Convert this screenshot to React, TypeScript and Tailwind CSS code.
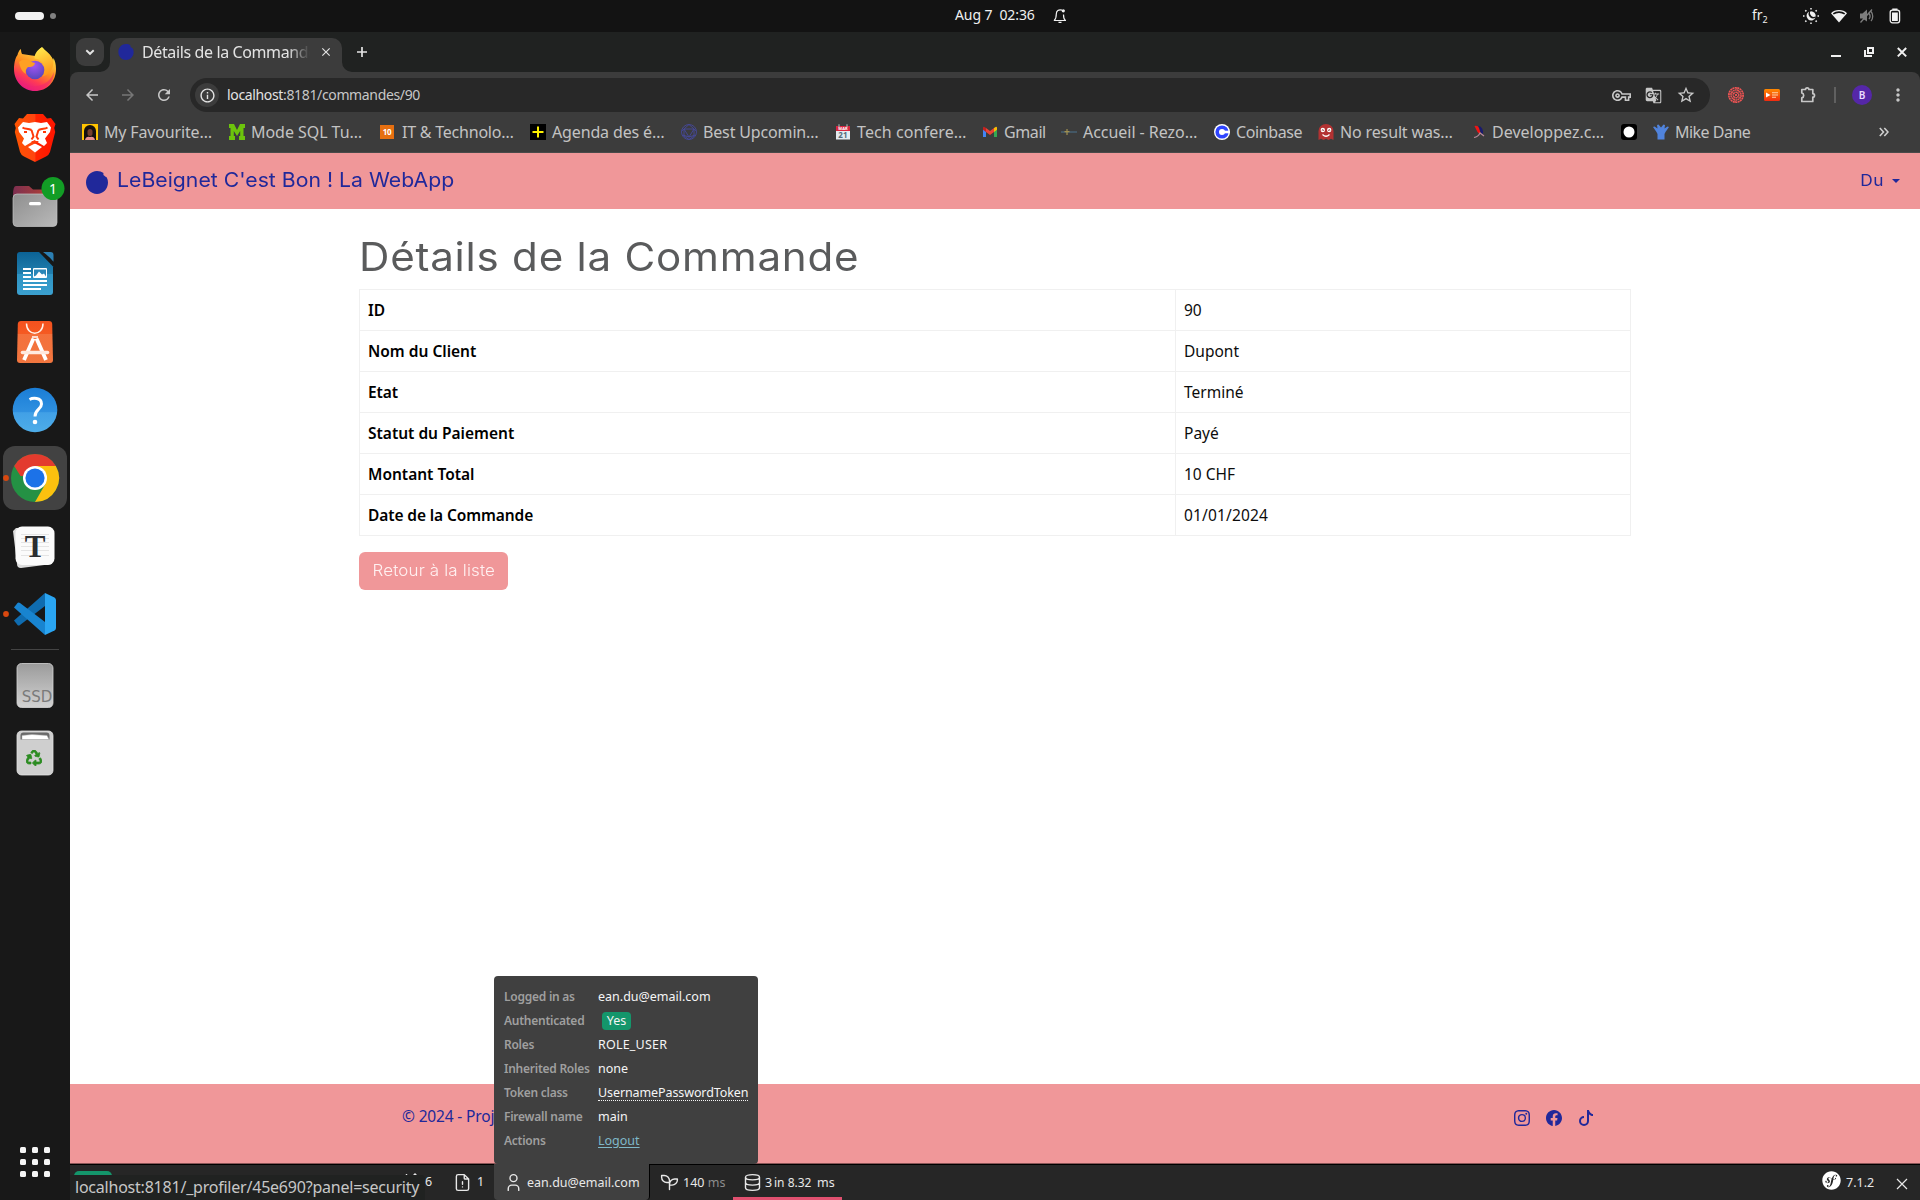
import type { ReactNode } from "react";
import { BsFacebook, BsInstagram, BsTiktok } from "react-icons/bs";
import { FaSymfony, FaRecycle } from "react-icons/fa";
import {
  MdArrowBack,
  MdArrowForward,
  MdClose,
  MdGTranslate,
  MdMoreVert,
  MdOutlineInfo,
  MdOutlineVpnKey,
  MdRefresh,
  MdStarBorder,
} from "react-icons/md";

const ubuntu = "font-['Noto_Sans',sans-serif]";
const display = "font-['Inter',sans-serif]";

/* ---------- System bar ---------- */

function TopBar() {
  return (
    <header className="flex h-8 shrink-0 items-center bg-[#131313] text-[#f0f0f0]">
      <div className="ml-[15px] h-2 w-[29px] rounded-full bg-[#f2f2f2]" />
      <div className="ml-1.5 h-1.5 w-1.5 rounded-full bg-[#818181]" />
      <div className="ml-[899px] w-[98px] whitespace-pre text-[14px] leading-8 tracking-[-0.1px]">
        <span className="relative -top-px">Aug 7{"  "}02:36</span>
      </div>
      <svg className="h-4 w-3.5" viewBox="0 0 14 16" fill="none" stroke="currentColor" strokeWidth="1.2">
        <path d="M9 2.2C5.500 1.200 3.300 3 3.300 6c0 3.500-.6 5-2 6.300M10.500 6.500c0 3 .5 4.800 1.800 5.800M.8 12.500h12.200M5.500 14.300h3" />
        <circle cx="10.300" cy="2.800" r="1.600" fill="currentColor" stroke="none" />
      </svg>
      <div className="ml-[685px] w-[51px] text-[14px] leading-8">
        fr<span className="relative top-[3px] text-[9px]">2</span>
      </div>
      <svg className="h-4 w-4" viewBox="0 0 16 16" fill="currentColor">
        <path d="M6.200 3.600A4.700 4.700 0 1 0 12.600 9.600 4.500 4.500 0 0 1 6.200 3.600z" />
        <path d="M8 3.300a4.700 4.700 0 0 1 4.700 5.200A4 4 0 0 1 7 4a3 3 0 0 1 1-.7z" />
        <g stroke="currentColor" strokeWidth="1.500">
          <path d="M8 0v1.500M8 14.500V16M0 8h1.500M14.500 8H16M2.300 2.300l1.100 1.100M12.600 12.600l1.100 1.100M2.300 13.700l1.100-1.100M12.600 3.400l1.100-1.100" />
        </g>
      </svg>
      <svg className="ml-3 h-4 w-4" viewBox="0 0 16 16">
        <path d="M8 2C4.800 2 2 3.200 0 5.200L8 14.500l8-9.300C14 3.200 11.200 2 8 2z" fill="#f2f2f2" />
        <path d="M1.800 5.400C3.500 4 5.700 3.300 8 3.300s4.500.7 6.200 2.100l-1 1.200A8.500 8.500 0 0 0 8 5a8.500 8.500 0 0 0-5.200 1.600z" fill="#131313" />
      </svg>
      <svg className="ml-3 h-4 w-4" viewBox="0 0 16 16" fill="none" stroke="#7d7d7d">
        <path d="M1 5.500h2.500L8 1.500v12L3.500 10.500H1z" fill="#7d7d7d" stroke="none" />
        <path d="M10 5.500c1.200 1.500 1.200 4 0 5.500M12 3.500c2.300 2.500 2.300 7 0 9.500M13 1.500L1.500 14.500" strokeWidth="1.300" />
      </svg>
      <svg className="ml-3 h-4 w-4" viewBox="0 0 16 16">
        <rect x="3.200" y="2.200" width="9.400" height="12.600" rx="2.200" fill="none" stroke="#f2f2f2" strokeWidth="1.300" />
        <rect x="5.300" y="0.500" width="5.200" height="1.800" fill="#f2f2f2" />
        <rect x="5" y="4.500" width="5.800" height="8.500" fill="#f2f2f2" />
      </svg>
    </header>
  );
}

/* ---------- Dock ---------- */

function DockIcon({ children }: { children: ReactNode }) {
  return (
    <svg className="h-[68px] w-[70px] shrink-0" viewBox="0 0 70 68">
      {children}
    </svg>
  );
}

function Dock() {
  return (
    <aside className="flex w-[70px] shrink-0 flex-col bg-[#181818] pt-[3px]">
      <DockIcon>
        <defs>
          <linearGradient id="ffBody" x1="0.800" y1="0" x2="0.300" y2="1">
            <stop offset="0.100" stopColor="#ffe94a" />
            <stop offset="0.500" stopColor="#ff8c1f" />
            <stop offset="0.750" stopColor="#ff3a55" />
            <stop offset="1" stopColor="#e0138c" />
          </linearGradient>
          <radialGradient id="ffGlobe" cx="0.450" cy="0.250" r="0.800">
            <stop offset="0" stopColor="#a454f5" />
            <stop offset="1" stopColor="#5246b8" />
          </radialGradient>
          <linearGradient id="ffFlame" x1="0" y1="0" x2="0.300" y2="1">
            <stop offset="0" stopColor="#fff04f" />
            <stop offset="1" stopColor="#ff9a1c" />
          </linearGradient>
        </defs>
        <path d="M22 19c-1-2-1-4-1-5-2 1-3 4-3.500 6C15 23 14 29 14 34c0 12 9 22 21 22s21-9 21-22c0-5-1-8-2.500-11l-.5 3c-1-4-3-6-5-8s-5-5-6-6c-4 3-6 6-6.500 9-5-1-9-1-13.500-2z" fill="url(#ffBody)" />
        <path d="M41.500 12.500c-5 3-7 7-7 11 5 0 9 4 10 9 0 7-3 9-3 9 8-1 12-8 12-15-1-4-3-6-6-9-3-2-5-3-6-5z" fill="url(#ffFlame)" />
        <circle cx="35" cy="35" r="9.300" fill="url(#ffGlobe)" />
        <path d="M19 27c4-3 8-3 11-1 2 1 4 2 5 2-1 4-4 4-7 4-2 2-3 4-2 7-4-2-6-7-7-12z" fill="#ffa023" />
        <path d="M16 41c4 8 13 11 21 10 8-1 14-6 17-14 0 10-8 18-19 18-9 0-17-6-19-14z" fill="#f0246f" opacity="0.550" />
      </DockIcon>
      <DockIcon>
        <defs>
          <linearGradient id="brave" x1="0" y1="0" x2="1" y2="0">
            <stop offset="0" stopColor="#ff5500" />
            <stop offset="0.500" stopColor="#ff4410" />
            <stop offset="0.520" stopColor="#ff2400" />
            <stop offset="1" stopColor="#ff1500" />
          </linearGradient>
        </defs>
        <path d="M27 11h16l4 4.500 4-.5 4.500 6-1.300 4 1 4L50 49q-1 3-4 4.500L35 59l-11-5.500q-3-1.500-4-4.500l-5.200-20 1-4-1.300-4L19 15l4 .5z" fill="url(#brave)" />
        <path d="M23 19l6 1 6-1 6 1 6-1 4 5.500-1 4.500-5 6.500 2 4.500-3 3-5-3-3-2-1.500-1-1.500 1-3 2-5 3-3-3 2-4.500-5-6.500-1-4.500z" fill="#fff" />
        <path d="M22.500 24.500c3 2 5 .5 9 2.500M47.500 24.500c-3 2-5 .5-9 2.500M31.500 27l2 6.500-2 3M38.500 27l-2 6.500 2 3M27 29l-3 0M43 29l3 0" fill="none" stroke="#ff3a0a" strokeWidth="2" />
        <path d="M28 44l7-3.500 7 3.500-7 5.500z" fill="#fff" />
        <path d="M31 38h8l-4 3z" fill="#ff3a0a" />
      </DockIcon>
      <DockIcon>
        <defs>
          <linearGradient id="drawer" x1="0" y1="0" x2="1" y2="1">
            <stop offset="0" stopColor="#8f8f8f" />
            <stop offset="1" stopColor="#b9b9b9" />
          </linearGradient>
          <linearGradient id="folder" x1="0" y1="0" x2="1" y2="0">
            <stop offset="0" stopColor="#7d2f50" />
            <stop offset="1" stopColor="#bd4530" />
          </linearGradient>
        </defs>
        <path d="M13 24q0-9 3-9h13l4 3.500h20q4 0 4 4V40H13z" fill="url(#folder)" />
        <rect x="13" y="23" width="44" height="32.500" rx="4" fill="url(#drawer)" stroke="#c4c4c4" strokeWidth="0.700" />
        <rect x="29" y="31" width="12" height="3.200" rx="1.500" fill="#fff" />
        <circle cx="53" cy="17.500" r="11.500" fill="#129d25" />
        <text x="53" y="22.500" textAnchor="middle" fontSize="14" fill="#fff">1</text>
      </DockIcon>
      <DockIcon>
        <defs>
          <linearGradient id="writer" x1="0" y1="0" x2="0" y2="1">
            <stop offset="0" stopColor="#0b6295" />
            <stop offset="0.500" stopColor="#217fae" />
            <stop offset="0.520" stopColor="#2e93c3" />
            <stop offset="1" stopColor="#3ba0cf" />
          </linearGradient>
        </defs>
        <path d="M20 13h19L53 27.500V53q0 3-3 3H20q-3 0-3-3V16q0-3 3-3z" fill="url(#writer)" />
        <path d="M43 13h7.500q3 0 3 3v6.700q-4-5-10.500-9.700z" fill="#2c80b4" />
        <path d="M23 30h8M23 34h8M23 38h8M23 42h24M23 46h24M23 50h18" stroke="#fff" strokeWidth="2" />
        <rect x="33" y="29" width="14" height="10" rx="1" fill="#fff" />
        <path d="M34 37.500v-7h12v7l-2-3-2 1-3-3-3 4z" fill="#2a87b8" />
      </DockIcon>
      <DockIcon>
        <defs>
          <linearGradient id="bag" x1="0" y1="0" x2="0" y2="1">
            <stop offset="0" stopColor="#f4511e" />
            <stop offset="0.300" stopColor="#f55a22" />
            <stop offset="0.320" stopColor="#f4713c" />
            <stop offset="1" stopColor="#f1763f" />
          </linearGradient>
        </defs>
        <path d="M21 14h28q3 0 3.200 3l.8 36q0 3-3 3H20q-3 0-3-3l.8-36q.2-3 3.200-3z" fill="url(#bag)" />
        <path d="M26.500 16.500c0 13 16.500 13 16.500 0" fill="none" stroke="#fff2ea" strokeWidth="1.500" />
        <path d="M33.500 31.500L24 53M36.500 31.500L46 53" fill="none" stroke="#fff" strokeWidth="3.800" />
        <path d="M32 30h6" stroke="#fff" strokeWidth="1.500" />
        <path d="M22.500 45.500h25" stroke="#ffe9de" strokeWidth="3.600" strokeLinecap="round" />
      </DockIcon>
      <DockIcon>
        <defs>
          <linearGradient id="help" x1="0" y1="0" x2="0" y2="1">
            <stop offset="0" stopColor="#1a7dd6" />
            <stop offset="0.540" stopColor="#2f90e0" />
            <stop offset="0.560" stopColor="#41a0e6" />
            <stop offset="1" stopColor="#4eade9" />
          </linearGradient>
        </defs>
        <circle cx="35" cy="35" r="22.300" fill="url(#help)" />
        <path d="M29.500 24.500c3-1.500 12-2.500 12 4.500 0 5.500-6.500 5-6.500 12.500" fill="none" stroke="#fff" strokeWidth="3" />
        <circle cx="35" cy="47" r="2.300" fill="#fff" />
      </DockIcon>
      <DockIcon>
        <rect x="3" y="3" width="64" height="64" rx="12" fill="#424242" />
        <circle cx="6" cy="35" r="2.900" fill="#d9480f" />
        <g transform="translate(35 35)">
          <circle r="24" fill="#249144" />
          <path d="M0 0L-20.800-12A24 24 0 0 1 20.800-12z" fill="#e33b2e" />
          <path d="M0-12H20.800A24 24 0 0 1 0 24L10.400 6z" fill="#fcc10f" />
          <path d="M-20.800-12L-10.400 6 0 0-10-12z" fill="#249144" />
          <path d="M-20.800-12h41.600L10 -12H0L-12-2-14.500-2z" fill="#e33b2e" />
          <circle r="12" fill="#fff" />
          <circle r="9.600" fill="#1c72e8" />
        </g>
      </DockIcon>
      <DockIcon>
        <path d="M16 17l33-1 3 37-31 4q-4 0-4-4l-4-33z" fill="#dcdcdc" />
        <rect x="15.500" y="15.500" width="39" height="38.500" rx="6.500" fill="#fbfbfb" />
        <path d="M21 23.500h28M21 27.500h28M21 31.500h28M21 35.500h28M21 39.500h28M21 44.500h28" stroke="#e4e4e4" strokeWidth="1.200" />
        <text x="35" y="45.500" textAnchor="middle" fontSize="31" fontWeight="700" fill="#2b2d30" fontFamily="Liberation Serif">T</text>
      </DockIcon>
      <DockIcon>
        <circle cx="6" cy="35" r="2.900" fill="#d9480f" />
        <path d="M14 41.500l3.500 4.500q1 1 2.500 0L45 27V14z" fill="#0f6cb0" />
        <path d="M14 28.500l3.500-4.500q1-1 2.500 0L45 43v13z" fill="#1884d0" />
        <path d="M45 14l9.500 4.500q1.500 1 1.500 2.500v28q0 1.500-1.500 2.500L45 56z" fill="#2aa5f2" />
      </DockIcon>
      <div className="mx-[11px] mt-0.5 mb-0.5 h-px bg-[#444444]" />
      <DockIcon>
        <defs>
          <linearGradient id="disk" x1="0" y1="0" x2="0" y2="1">
            <stop offset="0" stopColor="#9b9b9b" />
            <stop offset="1" stopColor="#d2d2d2" />
          </linearGradient>
        </defs>
        <rect x="17" y="11.500" width="36" height="44" rx="4.500" fill="url(#disk)" stroke="#d6d6d6" strokeWidth="0.800" />
        <text x="37" y="49.500" textAnchor="middle" fontSize="15" fill="#7a7a7a" fontFamily="DejaVu Sans">SSD</text>
      </DockIcon>
      <DockIcon>
        <rect x="17" y="11" width="36" height="44" rx="4.500" fill="#cfcfcf" stroke="#e2e2e2" strokeWidth="0.800" />
        <path d="M20.500 19.500v-4q0-3 3-3h23q3 0 3 3v4z" fill="#6a6a6a" />
        <path d="M22 19.500v-4l10-1 15 1 2 4z" fill="#fff" stroke="#aaa" strokeWidth="0.500" />
        <FaRecycle x="26" y="30" width="18" height="18" color="#2c8c22" stroke="#2c8c22" strokeWidth="24" />
      </DockIcon>
      <div className="mt-auto mb-[23px] ml-5 grid grid-cols-3 gap-1.5 self-start">
        {Array.from({ length: 9 }, (_, i) => (
          <span key={i} className="h-1.5 w-1.5 rounded-[1.5px] bg-[#f5f5f5]" />
        ))}
      </div>
    </aside>
  );
}

/* ---------- Browser chrome ---------- */

function DonutLogo({ className }: { className: string }) {
  return (
    <svg className={className} viewBox="0 0 22 23">
      <path d="M11 0c2.500 0 4.700.7 6.500 2-.4 1.500 0 2.500 1 2.800.6 1 1.500 1.200 2.300 1.700A11.300 11.300 0 0 1 22 11.500C22 18 17 23 11 23S0 18 0 11.500 5 0 11 0z" fill="#20289a" />
    </svg>
  );
}

function TabStrip() {
  return (
    <div className="flex h-10 bg-[#202221] pt-1.5 text-[#e3e3e3]">
      <div className="ml-1.5 flex h-7 w-7 items-center justify-center rounded-[9px] bg-[#3c3c3c]">
        <svg className="h-3 w-3" viewBox="0 0 12 12" fill="none" stroke="currentColor" strokeWidth="1.900">
          <path d="M2.300 4.200L6 7.800l3.700-3.600" />
        </svg>
      </div>
      <div className="relative ml-1.5 flex h-[34px] w-[232px] items-start rounded-t-[10px] bg-[#3c3c3c]">
        <svg className="absolute bottom-0 -left-2.5 h-2.5 w-2.5" viewBox="0 0 10 10">
          <path d="M10 0v10H0A10 10 0 0 0 10 0z" fill="#3c3c3c" />
        </svg>
        <svg className="absolute -right-2.5 bottom-0 h-2.5 w-2.5" viewBox="0 0 10 10">
          <path d="M0 0v10h10A10 10 0 0 1 0 0z" fill="#3c3c3c" />
        </svg>
        <DonutLogo className="mt-1.5 ml-2 h-4 w-4" />
        <div className="ml-2 h-7 w-[168px] overflow-hidden text-[16px] leading-7 tracking-[-0.38px] whitespace-nowrap [mask-image:linear-gradient(to_right,#000_146px,transparent_168px)]">
          Détails de la Commande
        </div>
        <MdClose className="mt-[7px] ml-[9px] h-[14px] w-[14px]" />
      </div>
      <svg className="mt-2 ml-[14px] h-3 w-3" viewBox="0 0 12 12" stroke="currentColor" strokeWidth="1.700">
        <path d="M6 1v10M1 6h10" />
      </svg>
      <div className="mr-[13px] ml-auto flex gap-[23px] pt-2">
        <svg className="h-3 w-2.5" viewBox="0 0 10 12">
          <path d="M0 9h10v2H0z" fill="#f0f0f0" />
        </svg>
        <svg className="h-3 w-2.5" viewBox="0 0 10 12" fill="none" stroke="#f0f0f0" strokeWidth="2">
          <path d="M4 2h5v5H4zM1 4v6h7" />
        </svg>
        <svg className="h-3 w-2.5" viewBox="0 0 10 12" fill="none" stroke="#f0f0f0" strokeWidth="2">
          <path d="M.8 2l8.400 8.400M9.200 2L.8 10.400" />
        </svg>
      </div>
    </div>
  );
}

function AddressRow() {
  return (
    <div className="flex h-[46px] items-center text-[#c7c7c7]">
      <MdArrowBack className="ml-[13px] h-[18px] w-[18px]" />
      <MdArrowForward className="ml-[18px] h-[18px] w-[18px] text-[#777777]" />
      <MdRefresh className="ml-[18px] h-[18px] w-[18px]" />
      <div className="ml-[17px] flex h-[34px] w-[1520px] items-center rounded-full bg-[#282828]">
        <div className="ml-[5px] flex h-6 w-6 items-center justify-center rounded-full bg-[#3c3c3c]">
          <MdOutlineInfo className="h-[17px] w-[17px] text-[#e3e3e3]" />
        </div>
        <div className="ml-2 text-[14px] leading-[34px] tracking-[-0.35px]">
          <span className="text-[#e3e3e3]">localhost</span>:8181/commandes/90
        </div>
        <MdOutlineVpnKey className="ml-auto h-[19px] w-[19px]" />
        <MdGTranslate className="ml-[14px] h-[17px] w-[17px]" />
        <MdStarBorder className="mr-[14px] ml-[14px] h-5 w-5" />
      </div>
      <svg className="ml-[18px] h-4 w-4" viewBox="0 0 16 16" fill="none" stroke="#f05454">
        <circle cx="8" cy="8" r="7.200" strokeWidth="1.600" strokeDasharray="2 0.500" />
        <circle cx="8" cy="8" r="5" strokeWidth="1.500" strokeDasharray="1.700 0.500" />
        <circle cx="8" cy="8" r="2.800" strokeWidth="1.400" strokeDasharray="1.200 0.400" />
        <circle cx="8" cy="8" r="1" fill="#f05454" stroke="none" />
        <path d="M8 1c3 2 3 4 0 7M15 8c-2 3-4 3-7 0M8 15c-3-2-3-4 0-7M1 8c2-3 4-3 7 0" strokeWidth="0.700" />
      </svg>
      <svg className="ml-5 h-4 w-4" viewBox="0 0 16 16">
        <defs>
          <linearGradient id="player" x1="0" y1="0" x2="0" y2="1">
            <stop offset="0" stopColor="#ff8a00" />
            <stop offset="1" stopColor="#f02a10" />
          </linearGradient>
        </defs>
        <rect y="2" width="16" height="12" rx="1.500" fill="url(#player)" />
        <path d="M2 5.500L6.500 8 2 10.500z" fill="#fff" />
        <path d="M8 5.700h6M8 8h6M8 10.300h4" stroke="#ffd2a8" strokeWidth="1.100" />
      </svg>
      <svg className="ml-[19px] h-[18px] w-[18px]" viewBox="0 0 18 18" fill="none" stroke="currentColor" strokeWidth="1.700" strokeLinejoin="round">
        <path d="M2.800 3.500h3.700a1.700 1.700 0 0 1 3.400 0h3.900v4.200a1.700 1.700 0 0 1 0 3.400v4.400h-11v-3.600a2.600 2.600 0 0 0 0-5z" />
      </svg>
      <div className="ml-[17px] h-4 w-0.5 bg-[#606060]" />
      <div className="ml-4 flex h-5 w-5 items-center justify-center rounded-full bg-[#5527a8] text-[10px] font-semibold text-[#eadcff]">
        B
      </div>
      <MdMoreVert className="ml-4 h-5 w-5" />
    </div>
  );
}

const bookmarks: { label: string; box: string; icon: ReactNode }[] = [
  {
    label: "My Favourite…",
    box: "w-[147px] tracking-[-0.16px]",
    icon: (
      <>
        <rect width="16" height="16" fill="#ffc400" />
        <path d="M2 16V7a6 6 0 0 1 12 0v9z" fill="#15100f" />
        <rect x="5.500" y="5" width="5" height="7" rx="2.500" fill="#74402f" />
        <path d="M3 16q1-4 5-3 4-1 5 3z" fill="#e88f8f" />
      </>
    ),
  },
  {
    label: "Mode SQL Tu…",
    box: "w-[151px] tracking-[-0.05px]",
    icon: <path d="M0 0h5l3 6 3-6h5v4h-1.500v8H16v4h-6v-4h1.200V7L8 12 4.800 7v5H6v4H0v-4h1.500V4H0z" fill="#6cc40c" />,
  },
  {
    label: "IT & Technolo…",
    box: "w-[150px] tracking-[-0.22px]",
    icon: (
      <>
        <rect y="1" width="14" height="14" fill="#e66f10" />
        <text x="7" y="11" textAnchor="middle" fontSize="8" fontWeight="700" fill="#fff">10</text>
      </>
    ),
  },
  {
    label: "Agenda des é…",
    box: "w-[151px] tracking-[-0.14px]",
    icon: (
      <>
        <rect width="16" height="16" fill="#000" />
        <path d="M8 2.500v11M2.500 8h11" stroke="#fff200" strokeWidth="2" />
      </>
    ),
  },
  {
    label: "Best Upcomin…",
    box: "w-[154px] tracking-[-0.15px]",
    icon: (
      <g fill="none" stroke="#45489b" strokeWidth="0.900">
        <circle cx="8" cy="8" r="7.500" />
        <path d="M8 .5L3 5v7l5 3.500 5-3.500V5zM3 5l10 0L8 13zM.7 7L3 5M15.300 7L13 5M1.500 11L8 13l6.500-2" />
      </g>
    ),
  },
  {
    label: "Tech confere…",
    box: "w-[147px] tracking-[0.1px]",
    icon: (
      <>
        <rect x="1" y="3" width="14" height="12.500" fill="#e3eaf0" />
        <rect x="1" y="2" width="14" height="5" fill="#d92640" />
        <path d="M4 .3v3M12 .3v3" stroke="#9aa" strokeWidth="1.200" />
        <text x="8" y="6.300" textAnchor="middle" fontSize="4" fontWeight="700" fill="#fff">MAR</text>
        <text x="8" y="14" textAnchor="middle" fontSize="8" fontWeight="700" fill="#546b7a">21</text>
      </>
    ),
  },
  {
    label: "Gmail",
    box: "w-[79px] tracking-[-0.4px]",
    icon: (
      <>
        <path d="M1 3.500v9.500h3V6.500z" fill="#4285f4" />
        <path d="M15 3.500v9.500h-3V6.500z" fill="#34a853" />
        <path d="M12 4l2-1.200q1 0 1 1.200v1.800l-3 2.200z" fill="#fbbc04" />
        <path d="M4 4l4 3.100L12 4v4l-4 3-4-3z" fill="#ea4335" />
        <path d="M1 4q0-1.200 1-1.200L4 4v4L1 5.800z" fill="#c5221f" />
      </>
    ),
  },
  {
    label: "Accueil - Rezo…",
    box: "w-[153px] tracking-[-0.04px]",
    icon: (
      <>
        <path d="M0 8h16" stroke="#47667c" strokeWidth="1.300" />
        <path d="M6 5v6M3.500 7.700h5" stroke="#a08f50" strokeWidth="1.200" />
      </>
    ),
  },
  {
    label: "Coinbase",
    box: "w-[104px] tracking-[-0.4px]",
    icon: (
      <>
        <circle cx="8" cy="8" r="8" fill="#fff" />
        <circle cx="8" cy="8" r="4.800" fill="none" stroke="#2f45ff" strokeWidth="3.600" />
        <path d="M10 6.700h6v2.600h-6z" fill="#fff" />
      </>
    ),
  },
  {
    label: "No result was…",
    box: "w-[152px] tracking-[-0.14px]",
    icon: (
      <>
        <path d="M.5 16V7a7.500 7 0 0 1 15 0v9l-2.500-1.200L10.500 16 8 14.800 5.500 16 3 14.800z" fill="#b33232" />
        <circle cx="4.800" cy="6" r="2.200" fill="#fff" />
        <circle cx="11.200" cy="6" r="2.200" fill="#fff" />
        <path d="M3.800 6.500q1-1.500 2 0M10.200 6.500q1-1.500 2 0" stroke="#7b1d1d" fill="none" />
        <path d="M4.500 10.500q3.500 3.500 7 0" stroke="#fff" strokeWidth="1.200" fill="none" />
      </>
    ),
  },
  {
    label: "Developpez.c…",
    box: "w-[151px]",
    icon: (
      <>
        <path d="M4.500 2q3-1 4.500 2l1.500 5q-1 2-3-1z" fill="#f01414" />
        <path d="M8.500 1.800q5 1.200 4.500 8.200l-2-1z" fill="#191a70" />
        <path d="M4 13.500q4-.5 6-4.500l4 3" stroke="#b88a9a" strokeWidth="1.200" fill="none" />
      </>
    ),
  },
  {
    label: "",
    box: "w-8",
    icon: (
      <>
        <rect width="16" height="16" rx="3" fill="#000" />
        <circle cx="8" cy="8" r="5.500" fill="#fff" />
      </>
    ),
  },
  {
    label: "Mike Dane",
    box: "w-[226px] tracking-[-0.52px]",
    icon: (
      <path d="M0 3l1.500-.5 3 2L4 1l1.500-.5L8 3.500 10.500.5 12 1l-.5 3.500 3-2L16 3l-3.500 5-1 2v5.500h-7V10l-1-2z" fill="#5083dc" />
    ),
  },
];

function BookmarksBar() {
  return (
    <div className="flex h-[35px] items-center border-b border-[#4a4a4a] pb-[7px] pl-3">
      {bookmarks.map((b) => (
        <div
          key={b.label || "untitled"}
          className={`flex shrink-0 items-center gap-1.5 text-[16px] leading-5 whitespace-nowrap text-[#c3c3c3] ${b.box}`}
        >
          <svg className="h-4 w-4 shrink-0" viewBox="0 0 16 16">
            {b.icon}
          </svg>
          {b.label}
        </div>
      ))}
      <svg className="h-2.5 w-2.5" viewBox="0 0 10 10" fill="none" stroke="#d0d0d0" strokeWidth="1.600">
        <path d="M.8 1L4.500 5 .8 9M5.300 1L9 5 5.300 9" />
      </svg>
    </div>
  );
}

/* ---------- Page ---------- */

function Navbar() {
  return (
    <nav className="flex h-14 items-center bg-[#f09799] text-[#20289a]">
      <DonutLogo className="mt-[3px] ml-4 h-[23px] w-[22px]" />
      <span className={`ml-[9px] origin-left scale-x-[1.06] pb-0.5 text-[20px] tracking-[0.02px] whitespace-nowrap ${display}`}>
        LeBeignet C'est Bon ! La WebApp
      </span>
      <span className={`ml-auto origin-right scale-x-[1.08] pb-0.5 text-[16px] tracking-[0.4px] ${display}`}>Du</span>
      <span className="mr-[20px] ml-2 h-0 w-0 border-x-4 border-t-4 border-x-transparent border-t-[#20289a]" />
    </nav>
  );
}

const rows = [
  { label: "ID", value: "90", labelTrack: "", valueTrack: "" },
  { label: "Nom du Client", value: "Dupont", labelTrack: "", valueTrack: "" },
  { label: "Etat", value: "Terminé", labelTrack: "tracking-[-0.1px]", valueTrack: "" },
  { label: "Statut du Paiement", value: "Payé", labelTrack: "", valueTrack: "" },
  { label: "Montant Total", value: "10 CHF", labelTrack: "", valueTrack: "" },
  { label: "Date de la Commande", value: "01/01/2024", labelTrack: "tracking-[-0.1px]", valueTrack: "tracking-[0.15px]" },
];

function OrderDetails() {
  return (
    <main className="ml-[289px] flex w-[1272px] flex-1 flex-col items-start pt-6">
      <h1 className={`origin-left scale-x-[1.08] text-[39px] leading-[48px] tracking-[0.7px] text-[#5a5b5c] ${display}`}>
        Détails de la Commande
      </h1>
      <table className="mt-2 w-full table-fixed border-collapse text-black">
        <tbody>
          {rows.map((r) => (
            <tr key={r.label} className="h-[41px]">
              <th className={`w-[816px] border border-[#f0f0f0] px-2 pt-0.5 text-left text-[15.5px] font-semibold ${r.labelTrack}`}>
                {r.label}
              </th>
              <td className={`border border-[#f0f0f0] px-2 pt-0.5 text-[15.5px] text-[#0c0c0c] ${r.valueTrack}`}>
                {r.value}
              </td>
            </tr>
          ))}
        </tbody>
      </table>
      <a className={`mt-4 flex h-[38px] w-[149px] items-center justify-center rounded-md bg-[#f09799] pb-0.5 text-[16px] text-[#fff1f1] ${display} font-light`}>
        <span className="scale-x-[1.06] tracking-[0.15px]">Retour à la liste</span>
      </a>
    </main>
  );
}

function PageFooter() {
  return (
    <footer className="flex h-[79px] shrink-0 bg-[#f09799] pt-[26px] text-[#20289a]">
      <span className="-mt-px ml-[332px] w-[1112px] text-[15.5px] leading-[15px] tracking-[-0.15px]">© 2024 - Proj</span>
      <div className="flex gap-4">
        <BsInstagram className="h-4 w-4" />
        <BsFacebook className="h-4 w-4" />
        <BsTiktok className="h-4 w-4" />
      </div>
    </footer>
  );
}

/* ---------- Profiler ---------- */

function LineIcon({ d, className }: { d: string; className: string }) {
  return (
    <svg
      className={`h-[21px] w-[21px] shrink-0 ${className}`}
      viewBox="0 0 24 24"
      fill="none"
      stroke="currentColor"
      strokeWidth="1.600"
      strokeLinecap="round"
      strokeLinejoin="round"
    >
      <path d={d} />
    </svg>
  );
}

const securityInfo: { label: string; value: ReactNode }[] = [
  { label: "Logged in as", value: "ean.du@email.com" },
  {
    label: "Authenticated",
    value: (
      <span className="ml-1 flex h-[18px] w-[29px] items-center justify-center rounded-[4px] bg-[#14966b]">Yes</span>
    ),
  },
  { label: "Roles", value: <span className="tracking-[0.2px]">ROLE_USER</span> },
  { label: "Inherited Roles", value: "none" },
  {
    label: "Token class",
    value: (
      <span className="-mt-px h-[17px] border-b border-dotted border-[#f5f5f5] leading-[17px] tracking-[-0.1px]">
        UsernamePasswordToken
      </span>
    ),
  },
  { label: "Firewall name", value: "main" },
  { label: "Actions", value: <span className="text-[#7fb8c8] underline underline-offset-2">Logout</span> },
];

function SecurityPanel() {
  return (
    <div className="absolute bottom-9 left-0 flex h-[188px] w-[264px] flex-col rounded-[4px] bg-[#404040] pt-[9px] pl-2.5">
      {securityInfo.map((s) => (
        <div key={s.label} className="flex h-6 items-center text-[12.5px] whitespace-nowrap text-[#f5f5f5]">
          <span className="w-[94px] text-[12px] font-semibold tracking-[-0.25px] text-[#9f9f9f]">{s.label}</span>
          {s.value}
        </div>
      ))}
    </div>
  );
}

function ProfilerBar() {
  return (
    <div className="relative flex h-[37px] shrink-0 border-t border-[#8a5557] bg-[#262626] text-[12.5px] text-[#e8e8e8] shadow-[inset_0_1px_0_#000]">
      <div className="mt-[7px] ml-1 h-[29px] w-[38px] rounded-[5px] bg-[#14966b]" />
      <svg className="mt-2 ml-[290px] h-5 w-5 shrink-0" viewBox="0 0 20 20" stroke="currentColor" strokeWidth="1.400" fill="none">
        <path d="M4.500 2v3M9 6l4-4 4 4" />
      </svg>
      <span className="ml-[3px] w-[27px] leading-9">6</span>
      <LineIcon
        className="mt-2 h-5 w-5"
        d="M14 3v4a1 1 0 0 0 1 1h4 M17 21h-10a2 2 0 0 1 -2 -2v-14a2 2 0 0 1 2 -2h7l5 5v11a2 2 0 0 1 -2 2z M12 17l.01 0 M12 11l0 3"
      />
      <span className="ml-1 w-[17px] leading-9">1</span>
      <div className="relative flex h-9 w-[156px] rounded-b-[4px] border-r border-black bg-[#404040]">
        <SecurityPanel />
        <LineIcon
          className="mt-2 ml-[9px]"
          d="M8 7a4 4 0 1 0 8 0a4 4 0 0 0 -8 0 M6 21v-2a4 4 0 0 1 4 -4h4a4 4 0 0 1 4 4v2"
        />
        <span className="ml-[3px] leading-[37px]">ean.du@email.com</span>
      </div>
      <LineIcon
        className="mt-2 ml-[9px]"
        d="M12 10a6 6 0 0 0 -6 -6h-3v2a6 6 0 0 0 6 6h3 M12 14a6 6 0 0 1 6 -6h3v1a6 6 0 0 1 -6 6h-3 M12 20l0 -10"
      />
      <span className="ml-[3px] w-[50px] leading-[37px]">
        140 <span className="text-[#8d8d8d]">ms</span>
      </span>
      <div className="flex h-9 w-[109px] border-b-[3px] border-[#e0506f]">
        <LineIcon
          className="mt-2 ml-[9px]"
          d="M4 6a8 3 0 1 0 16 0a8 3 0 1 0 -16 0 M4 6v6a8 3 0 0 0 16 0v-6 M4 12v6a8 3 0 0 0 16 0v-6"
        />
        <span className="ml-0.5 flex leading-[37px] whitespace-nowrap">
          <span className="w-[9px]">3</span>
          <span className="w-[43px] text-[12px]">in 8.32</span>
          <span>ms</span>
        </span>
      </div>
      <FaSymfony className="mt-[7px] ml-auto h-[19px] w-[19px] text-white" />
      <span className="ml-[5px] w-[50px] text-[12.5px] leading-[37px]">7.1.2</span>
      <svg className="mt-3.5 mr-3 h-3 w-3" viewBox="0 0 12 12" stroke="currentColor" strokeWidth="1.200">
        <path d="M1 1l10 10M11 1L1 11" />
      </svg>
      <div className="absolute bottom-0 left-0 h-[25px] w-[355px] rounded-tr-[4px] bg-[#202221] pl-[5px] text-[16px] leading-[25px] tracking-[-0.22px] whitespace-nowrap text-[#c7c7c7]">
        localhost:8181/_profiler/45e690?panel=security
      </div>
    </div>
  );
}

export default function App() {
  return (
    <div className={`flex h-[1200px] w-[1920px] flex-col overflow-hidden bg-[#131313] ${ubuntu}`}>
      <TopBar />
      <div className="flex min-h-0 flex-1">
        <Dock />
        <div className="flex min-w-0 flex-1 flex-col bg-white">
          <div className="bg-[#202221]">
            <TabStrip />
            <div className="rounded-t-[8px] bg-[#3c3c3c]">
              <AddressRow />
              <BookmarksBar />
            </div>
          </div>
          <Navbar />
          <OrderDetails />
          <PageFooter />
          <ProfilerBar />
        </div>
      </div>
    </div>
  );
}
